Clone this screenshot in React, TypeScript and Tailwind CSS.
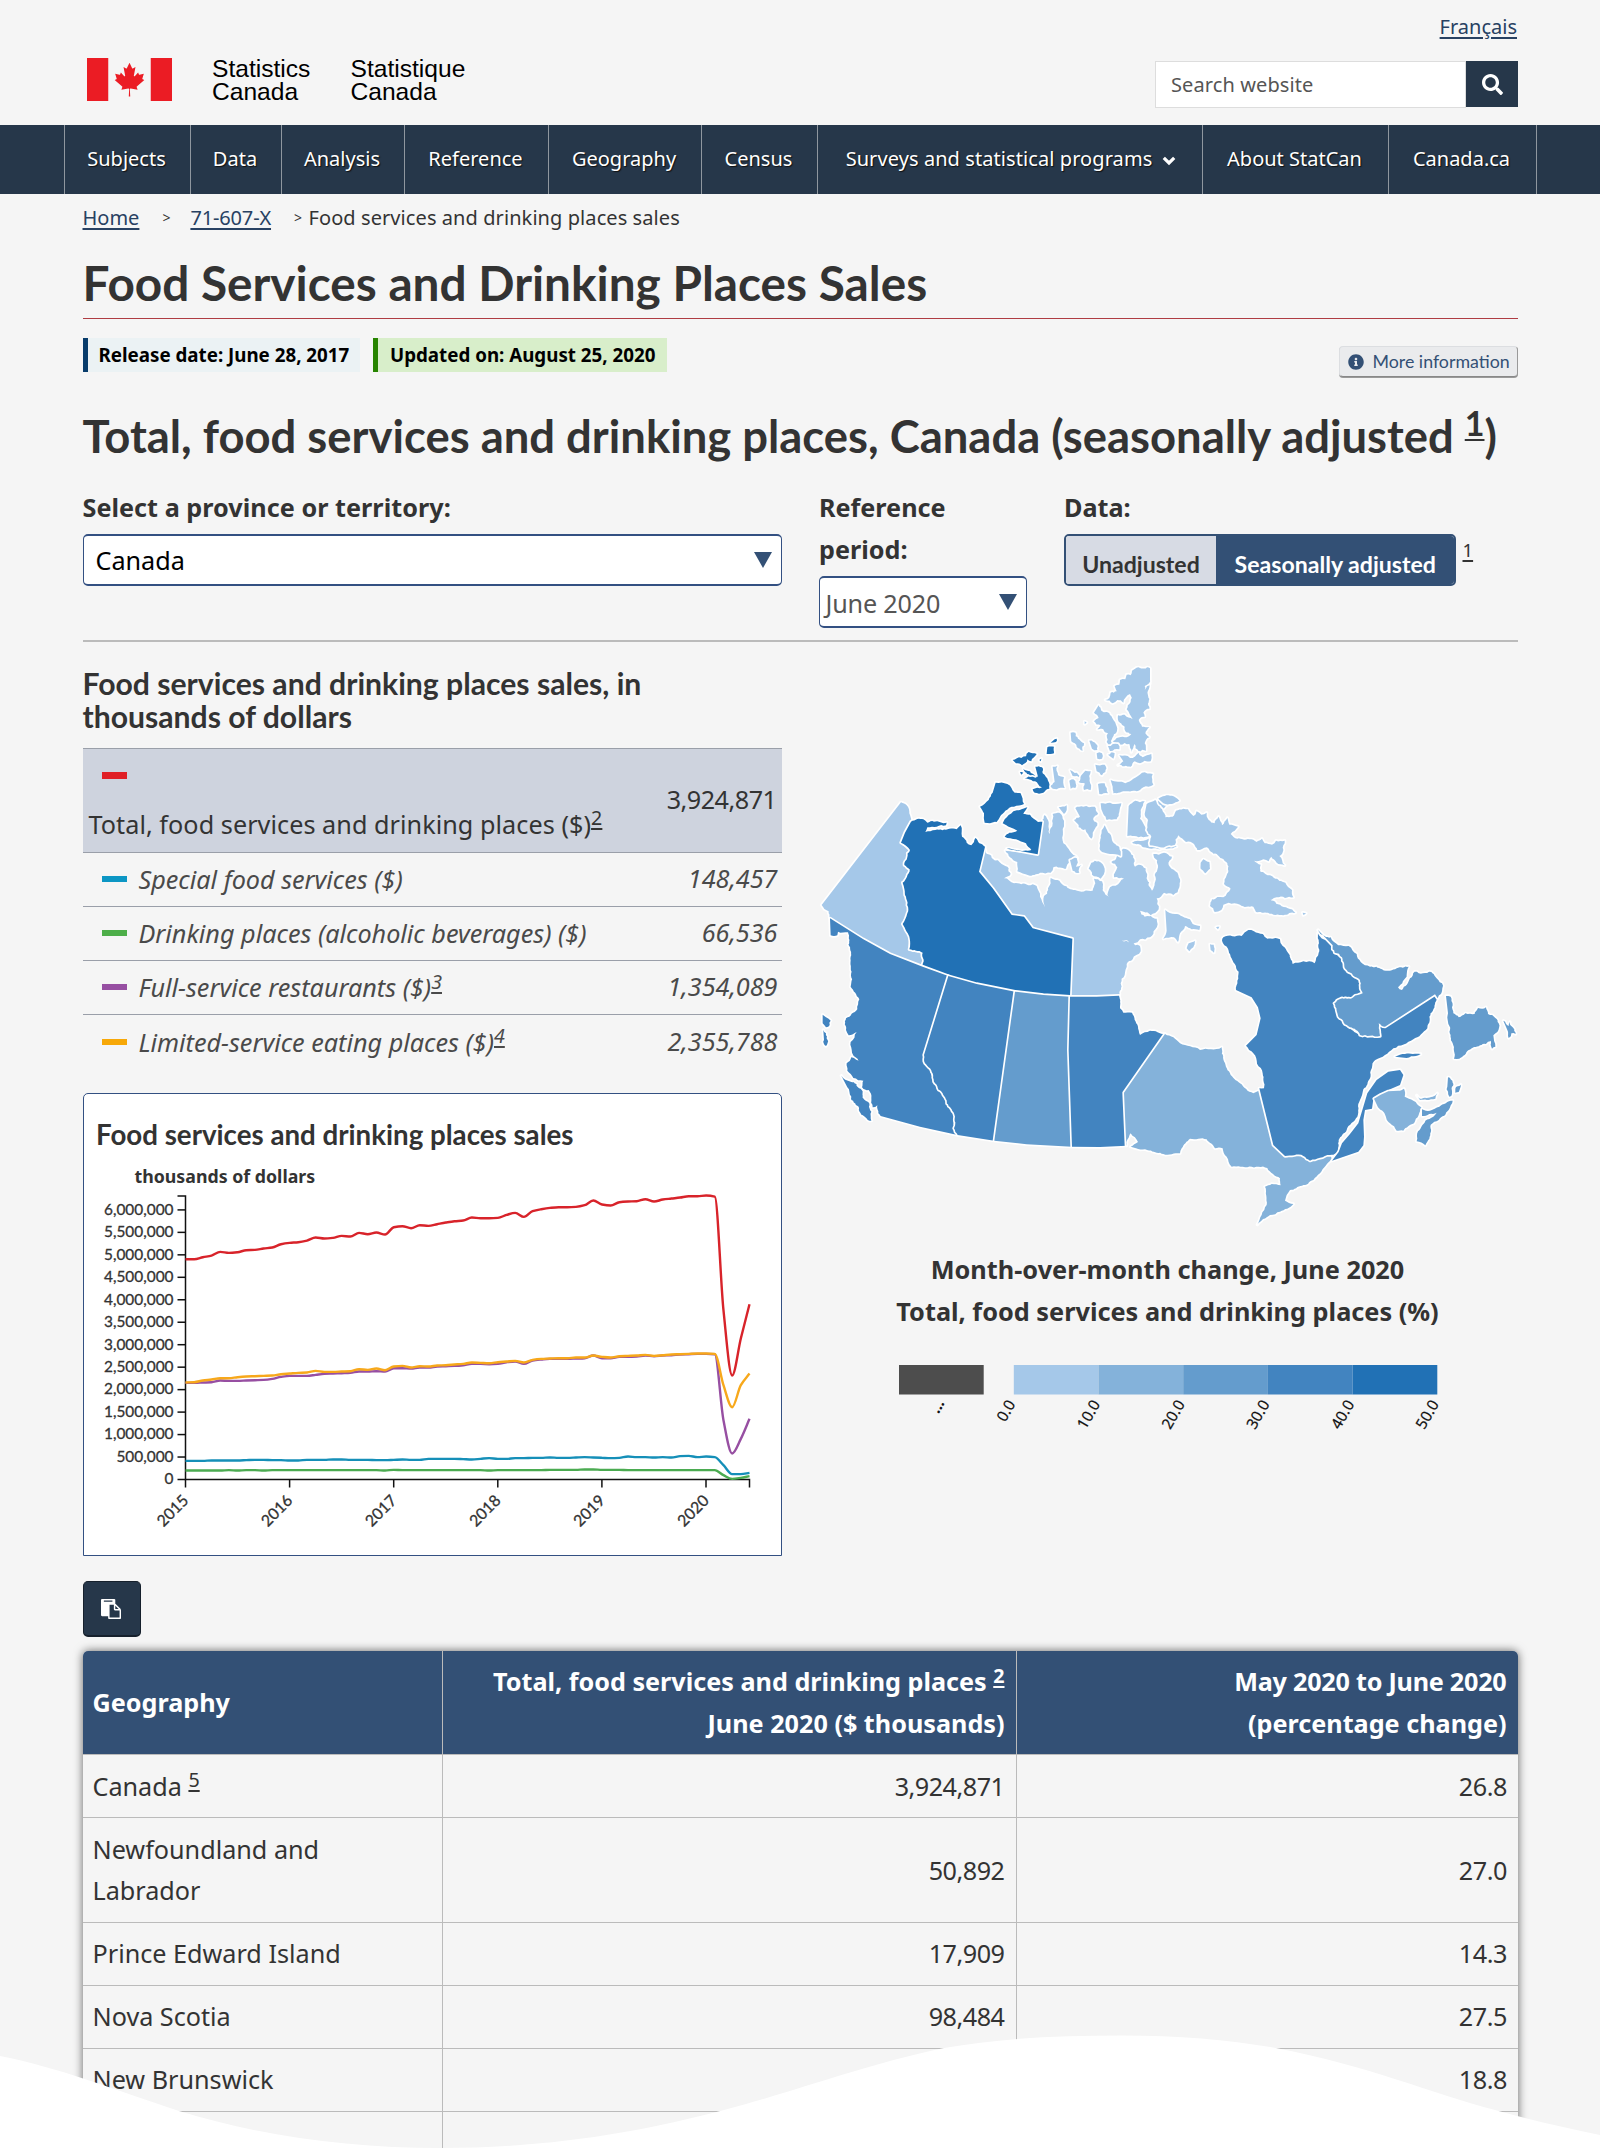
import React from "react";
import { FaSearch, FaInfoCircle } from "react-icons/fa";

const NAV: { label: string; width: string; caret?: boolean }[] = [
  { label: "Subjects", width: "w-[126px]" },
  { label: "Data", width: "w-[91px]" },
  { label: "Analysis", width: "w-[123px]" },
  { label: "Reference", width: "w-[144px]" },
  { label: "Geography", width: "w-[153px]" },
  { label: "Census", width: "w-[116px]" },
  { label: "Surveys and statistical programs", width: "w-[385px]", caret: true },
  { label: "About StatCan", width: "w-[186px]" },
  { label: "Canada.ca", width: "w-[148px]" },
];

const SERIES_ROWS = [
  { name: "Special food services ($)", value: "148,457", color: "bg-[#0c96c4]" },
  { name: "Drinking places (alcoholic beverages) ($)", value: "66,536", color: "bg-[#4dae49]" },
  { name: "Full-service restaurants ($)", value: "1,354,089", color: "bg-[#974fa2]", note: "3" },
  { name: "Limited-service eating places ($)", value: "2,355,788", color: "bg-[#f7a808]", note: "4" },
];

const GEO_ROWS = [
  { name: "Canada", note: "5", total: "3,924,871", change: "26.8" },
  { name: "Newfoundland and Labrador", total: "50,892", change: "27.0" },
  { name: "Prince Edward Island", total: "17,909", change: "14.3" },
  { name: "Nova Scotia", total: "98,484", change: "27.5" },
  { name: "New Brunswick", total: "", change: "18.8" },
  { name: "", total: "", change: "" },
];

/* ---------- line chart ---------- */

const X0 = 101.5;
const X1 = 665.5;
const Y0 = 385.5;
const UNIT = 0.044933;

type Line = { color: string; values: number[] };

const k = (list: number[]) => list.map((v) => (1198 - v) * 7.417);

const LINES: Line[] = [
  {
    color: "#974fa2",
    values: k([
      908, 908, 907, 906, 901, 902, 902, 901, 900, 899, 896, 890, 887, 887, 887, 884, 881, 880, 879, 878, 874, 874, 873,
      874, 864, 864, 865, 862, 862, 859, 858, 857, 855, 851, 851, 852, 851, 846, 844, 851, 841, 838, 836, 836, 836, 835,
      834, 826, 834, 834, 830, 830, 829, 826, 828, 826, 825, 823, 822, 821, 821, 822, 1020, 1120, 1076, 1016,
    ]),
  },
  {
    color: "#f7a81b",
    values: k([
      907, 906, 901, 898, 894, 894, 891, 889, 888, 887, 886, 882, 880, 878, 877, 872, 875, 875, 874, 873, 867, 869, 865,
      870, 859, 857, 862, 858, 859, 856, 855, 853, 851, 847, 848, 849, 846, 844, 842, 847, 839, 836, 835, 834, 834, 832,
      832, 826, 830, 832, 828, 827, 826, 824, 827, 825, 823, 822, 821, 820, 820, 821, 915, 981, 915, 880,
    ]),
  },
  {
    color: "#158fb8",
    values: k([
      1142, 1142, 1142, 1141, 1141, 1141, 1141, 1140, 1139, 1139, 1140, 1140, 1141, 1141, 1139, 1139, 1139, 1138, 1138,
      1139, 1139, 1139, 1140, 1140, 1139, 1138, 1139, 1139, 1136, 1136, 1136, 1136, 1137, 1138, 1136, 1134, 1136, 1136,
      1134, 1134, 1133, 1133, 1132, 1133, 1133, 1132, 1131, 1132, 1133, 1134, 1133, 1129, 1131, 1131, 1132, 1131, 1132,
      1128, 1127, 1131, 1129, 1131, 1155, 1182, 1182, 1178,
    ]),
  },
  {
    color: "#4bab51",
    values: k([
      1171, 1171, 1171, 1171, 1171, 1170, 1171, 1170, 1170, 1171, 1170, 1170, 1170, 1170, 1170, 1170, 1170, 1170, 1170,
      1170, 1170, 1170, 1170, 1171, 1169, 1170, 1170, 1170, 1170, 1170, 1170, 1170, 1170, 1170, 1170, 1171, 1170, 1170,
      1170, 1170, 1170, 1170, 1169, 1169, 1169, 1169, 1168, 1168, 1169, 1169, 1169, 1170, 1170, 1170, 1170, 1170, 1170,
      1170, 1170, 1170, 1170, 1170, 1185, 1196, 1193, 1188,
    ]),
  },
  {
    color: "#d8232a",
    values: k([
      537, 537, 531, 526, 515, 518, 516, 510, 509, 505, 502, 492, 488, 486, 481, 472, 475, 473, 467, 469, 458, 462, 457,
      463, 441, 438, 444, 435, 437, 432, 427, 423, 421, 412, 414, 414, 413, 404, 398, 410, 393, 387, 383, 381, 381, 380,
      375, 361, 373, 376, 366, 364, 363, 357, 364, 358, 355, 352, 348, 348, 346, 349, 690, 886, 775, 672,
    ]),
  },
];

/* Monotone cubic interpolation, so the curve never overshoots its data. */
function linePath(values: number[]) {
  const step = (X1 - X0) / (values.length - 1);
  const y = values.map((v) => Y0 - v * UNIT);
  const slope = y.slice(1).map((v, i) => v - y[i]);
  const tangent = y.map((_, i) => {
    if (i === 0) return slope[0];
    if (i === y.length - 1) return slope[i - 1];
    const a = slope[i - 1];
    const b = slope[i];
    return a * b <= 0 ? 0 : (2 * a * b) / (a + b);
  });
  let d = `M${X0},${y[0].toFixed(2)}`;
  for (let i = 1; i < y.length; i++) {
    const xa = X0 + step * (i - 1);
    const xb = X0 + step * i;
    d += `C${(xa + step / 3).toFixed(2)},${(y[i - 1] + tangent[i - 1] / 3).toFixed(2)} ${(xb - step / 3).toFixed(2)},${(
      y[i] -
      tangent[i] / 3
    ).toFixed(2)} ${xb.toFixed(2)},${y[i].toFixed(2)}`;
  }
  return d;
}

function SalesChart() {
  const ticks = Array.from({ length: 13 }, (_, i) => i * 500000);
  const years = [2015, 2016, 2017, 2018, 2019, 2020];
  return (
    <svg width="695" height="459" viewBox="0 0 695 459" className="block">
      <text x="12" y="50.8" fontSize="27.7" fontWeight="700" fill="#333" fontFamily="Lato, sans-serif">
        Food services and drinking places sales
      </text>
      <text x="50.5" y="88.5" fontSize="17.75" fontWeight="700" fill="#333" fontFamily="'Noto Sans', sans-serif">
        thousands of dollars
      </text>
      <path d={`M93.5,102H${X0}V${Y0}H${X1}V393.500`} fill="none" stroke="#111" strokeWidth="1.5" />
      {ticks.map((t) => {
        const y = Y0 - (t / 1000) * UNIT;
        return (
          <g key={t}>
            <path d={`M93.5,${y}H${X0}`} stroke="#111" strokeWidth="1.5" />
            <text x="89.5" y={y + 4.8} fontSize="15.4" textAnchor="end" fill="#333" stroke="#333" strokeWidth="0.3" fontFamily="Lato, sans-serif">
              {t.toLocaleString("en-US")}
            </text>
          </g>
        );
      })}
      {years.map((yr, i) => {
        const x = X0 + i * 104.1;
        return (
          <g key={yr}>
            <path d={`M${x},${Y0}V393.500`} stroke="#111" strokeWidth="1.5" />
            <text
              transform={`translate(${x + 4},407.5) rotate(-45)`}
              fontSize="15.8"
              textAnchor="end"
              fill="#333"
              stroke="#333"
              strokeWidth="0.3"
              fontFamily="Lato, sans-serif"
            >
              {yr}
            </text>
          </g>
        );
      })}
      {LINES.map((l) => (
        <path key={l.color} d={linePath(l.values)} fill="none" stroke={l.color} strokeWidth="2.4" strokeLinejoin="round" />
      ))}
    </svg>
  );
}

/* ---------- map ---------- */

/* Each region is a list of runs; "r" runs are coastlines and get a ragged edge. */
type Run = ["s" | "r", string];
type Region = { fill: string; runs: Run[]; amp?: number };

const C = { c0: "#a5c8e9", c1: "#84b2da", c2: "#649ccd", c3: "#4284c0", c4: "#2171b5" };

const parse = (s: string) => s.trim().split(/\s+/).map((p) => p.split(",").map(Number) as [number, number]);

const noise = (x: number, y: number) => {
  const v = Math.sin(x * 12.9898 + y * 78.233) * 43758.5453;
  return (v - Math.floor(v)) * 2 - 1;
};

function ragged(a: [number, number], b: [number, number], amp: number): string {
  const dx = b[0] - a[0];
  const dy = b[1] - a[1];
  const len = Math.hypot(dx, dy);
  if (len < 9) return ` ${b[0].toFixed(1)},${b[1].toFixed(1)}`;
  const off = noise(a[0] + b[0], a[1] + b[1]) * amp * Math.min(len, 26);
  const m: [number, number] = [(a[0] + b[0]) / 2 - (dy / len) * off, (a[1] + b[1]) / 2 + (dx / len) * off];
  return ragged(a, m, amp) + ragged(m, b, amp);
}

function regionPath({ runs, amp = 0.22 }: Region) {
  let d = "";
  let prev: [number, number] | null = null;
  runs.forEach(([kind, s]) => {
    parse(s).forEach((p) => {
      if (!prev) d = `M${p[0]},${p[1]}`;
      else if (kind === "r") d += ragged(prev, p, amp);
      else d += ` ${p[0]},${p[1]}`;
      prev = p;
    });
  });
  return d + "Z";
}

const isle = (fill: string, s: string, amp?: number): Region => ({ fill, runs: [["r", s]], amp });

const REGIONS: Region[] = [
  // Nunavut mainland
  {
    fill: C.c0,
    runs: [
      ["s", "525,597"],
      [
        "r",
        "548,626 575,642 596,655 602,672 582,685 612,700 655,706 680,708 690,740 704,772 702,738 722,700 722,684 742,690 760,706 795,720 848,722 856,700 852,686 876,694 884,728 896,742 900,712 930,696 942,686 912,682 922,652 904,636 920,620 940,596 962,608 975,650 998,648 1012,690 1026,722 1034,700 1044,652 1030,612 1062,608 1086,620 1076,645 1110,688 1108,712 1090,735 1062,728 1040,745 1046,778 1022,796 990,782 1004,800 1040,806 1036,838 1020,862 990,868 972,880 935,872 990,888 992,904 968,928 950,942 944,975 932,1000 927,1037",
      ],
      ["s", "780,1040 787,866 668,835 642,800 605,795 548,715 507,665"],
    ],
    amp: 0.2,
  },
  // Victoria Island, eastern part
  {
    fill: C.c0,
    runs: [
      ["s", "683,613 697,515"],
      ["r", "704,495 716,516 720,552 728,520 728,492 748,488 762,512 760,580 780,604 802,624 778,632 768,656 730,652 722,668 690,668 655,676 622,664 622,636 600,622 586,602"],
    ],
    amp: 0.14,
  },
  // Axel Heiberg
  isle(C.c0, "866,166 874,182 890,186 904,198 918,224 920,246 908,262 902,292 890,276 894,250 880,238 862,238 872,226 852,214 866,204 852,188", 0.2),
  // Ellesmere
  isle(
    C.c0,
    "1020,55 985,52 966,62 962,76 950,74 946,88 930,90 928,104 914,108 920,124 902,128 898,144 886,150 908,160 922,150 940,158 960,132 962,156 950,178 968,208 944,194 924,196 930,218 944,230 946,244 964,252 944,262 920,264 908,274 930,284 958,282 964,306 974,282 986,304 1008,302 1004,280 1018,262 1006,250 1018,232 996,230 986,210 1004,200 1000,188 1018,176 1020,100 1004,120 1004,108 1020,88",
    0.2,
  ),
  isle(C.c0, "928,316 960,324 986,308 998,322 1024,312 1022,334 1004,332 990,340 974,334 962,350 924,346 940,334", 0.2),
  isle(C.c0, "902,390 946,400 970,386 996,368 1028,372 1030,404 1000,412 990,420 950,424 910,430 908,410", 0.14),
  isle(C.c0, "782,248 796,248 804,266 822,280 818,302 800,290 784,274"),
  isle(C.c0, "838,272 858,282 862,300 846,296"),
  isle(C.c0, "894,288 924,282 928,298 900,304"),
  isle(C.c0, "860,310 876,310 876,326 862,326"),
  isle(C.c0, "894,314 914,310 910,326"),
  isle(C.c0, "856,344 884,344 886,366 876,376 860,364"),
  isle(C.c0, "864,402 884,400 894,430 868,432"),
  isle(C.c0, "728,350 742,348 744,376 762,382 764,414 740,418 718,410 734,396", 0.14),
  isle(C.c0, "780,360 800,368 814,380 788,378"),
  isle(C.c0, "826,362 842,364 842,420 822,420 824,400 806,396 814,376", 0.14),
  isle(C.c0, "778,392 790,388 796,414 782,416"),
  isle(C.c0, "746,472 770,466 762,492"),
  isle(C.c0, "796,474 820,470 854,470 864,490 850,504 862,520 844,566 826,538 806,532 792,510 810,500", 0.2),
  isle(C.c0, "872,460 900,458 934,460 928,486 920,508 890,510 880,492 874,478", 0.12),
  isle(C.c0, "884,526 872,558 870,600 900,612 932,618 928,592 912,580 904,560 892,542", 0.14),
  isle(C.c0, "844,638 866,634 884,656 872,686 846,674 836,656", 0.16),
  isle(C.c0, "780,630 800,624 798,650 814,646 808,668 788,662"),
  // Brodeur and Borden peninsulas
  isle(C.c0, "956,468 976,452 1004,454 992,480 990,506 1006,532 1026,552 1000,562 972,558 952,558", 0.14),
  isle(C.c0, "1044,452 1068,438 1084,460 1040,490 1074,520 1070,560 1100,590 1050,598 1000,592 966,578 1000,572 1032,560 1018,520 1006,490 1014,466", 0.12),
  // Baffin Island
  isle(
    C.c0,
    "1010,462 1036,450 1050,470 1066,502 1088,500 1098,482 1120,476 1134,478 1150,498 1160,484 1174,494 1190,488 1196,510 1214,520 1226,500 1236,526 1252,504 1258,524 1284,530 1262,552 1282,566 1318,568 1340,576 1356,566 1364,580 1386,584 1398,572 1424,572 1420,600 1408,618 1424,646 1400,638 1384,620 1376,634 1360,628 1332,632 1352,644 1350,664 1366,672 1392,684 1426,698 1446,720 1450,742 1400,742 1368,748 1410,764 1456,788 1420,796 1374,788 1338,786 1330,770 1290,764 1256,758 1240,764 1234,780 1214,786 1200,768 1206,748 1240,742 1262,716 1242,702 1250,676 1252,640 1220,612 1190,592 1162,600 1152,582 1128,576 1105,556 1095,584 1050,592 1020,586 1024,560 1010,540 1014,510 1004,492",
    0.16,
  ),
  isle(C.c0, "1045,446 1064,438 1086,437 1108,452 1086,462 1060,460", 0.1),
  isle(C.c0, "1180,628 1198,636 1200,656 1186,670 1172,656 1172,638", 0.06),
  // Southampton and neighbours
  isle(C.c0, "1066,780 1095,792 1140,808 1148,822 1170,828 1168,840 1145,838 1125,828 1110,850 1104,876 1092,862 1060,866 1070,842", 0.14),
  isle(C.c0, "1130,895 1136,880 1155,873 1150,892 1138,904", 0.1),
  isle(C.c0, "1200,883 1211,884 1212,908 1202,900", 0.1),
  isle(C.c0, "1218,832 1228,830 1224,838", 0.1),
  isle(C.c0, "1478,788 1488,790 1480,795", 0.1),
  isle(C.c0, "824,214 830,218 824,222", 0.1),
  // Yukon
  {
    fill: C.c0,
    runs: [
      ["s", "273,457"],
      ["r", "290,466 303,515"],
      ["s", "285,548 273,578"],
      ["r", "300,600 283,645 299,658 291,680 278,698 288,740 292,790 278,822 290,845 299,865 298,898 338,908"],
      ["s", "338,950 240,912 160,868 60,805"],
      ["r", "56,784 35,765"],
    ],
    amp: 0.14,
  },
  // Northwest Territories mainland
  {
    fill: C.c4,
    runs: [
      ["s", "303,515"],
      ["r", "322,507 340,508 352,518 372,515 410,518 408,526 352,532 346,546 376,540 418,536 440,538 452,526 456,560 470,578 484,586 496,564 508,580 525,590"],
      ["s", "507,665 548,715 605,795 642,800 668,835 787,866 780,1040 700,1035 615,1025 500,1002 415,978 338,950"],
      ["r", "338,908 298,898 299,865 290,845 278,822 292,790 288,740 278,698 291,680 299,658 283,645 300,600 273,578"],
      ["s", "285,548"],
    ],
    amp: 0.14,
  },
  isle(C.c4, "557,398 592,402 614,428 632,430 642,462 612,470 586,482 570,500 560,516 540,520 524,518 522,490 510,470 536,450 548,428", 0.12),
  {
    fill: C.c4,
    runs: [
      ["r", "584,508 610,484 652,472 640,492 660,494 684,516 697,515"],
      ["s", "683,613 590,596"],
      ["r", "620,600 664,600 648,580 618,568 584,560 598,548 622,542 600,532 578,520"],
    ],
    amp: 0.1,
  },
  isle(C.c4, "608,330 634,324 656,306 680,312 664,334 652,328 636,346 618,340"),
  isle(C.c4, "676,350 696,352 698,370 714,392 718,416 700,428 674,428 668,418 696,412 684,402 664,390 644,386 658,378 684,380", 0.18),
  isle(C.c4, "640,356 660,364 676,378 660,376 644,366"),
  isle(C.c4, "712,292 732,290 732,310 710,312", 0.1),
  isle(C.c4, "734,268 740,266 738,276 722,278"),
  isle(C.c4, "630,366 640,368 634,374"),
  isle(C.c4, "688,330 694,326 692,334"),
  // British Columbia
  {
    fill: C.c3,
    runs: [
      ["s", "60,805 160,868 240,912 338,950 415,978 342,1215"],
      ["r", "345,1240 360,1255 375,1300 400,1335 435,1400 432,1435 443,1455"],
      ["s", "330,1430 212,1398"],
      ["r", "205,1390 202,1366 188,1372 184,1344 176,1320 156,1312 160,1292 130,1284 112,1262 110,1240 124,1222 152,1238 126,1208 122,1176 140,1146 116,1156 108,1140 108,1105 142,1078 148,1048 122,1010 122,920 114,847 84,845 82,856 62,856"],
    ],
    amp: 0.14,
  },
  isle(C.c3, "94,1277 122,1295 152,1316 164,1350 184,1385 184,1412 166,1402 146,1370 124,1340 112,1312"),
  isle(C.c3, "38,1094 48,1102 62,1112 48,1132 38,1120"),
  isle(C.c3, "40,1140 48,1150 48,1188 42,1170"),
  // Alberta
  {
    fill: C.c3,
    runs: [
      ["s", "342,1215 415,978 500,1002 615,1025 553,1472 443,1455"],
      ["r", "432,1435 435,1400 400,1335 375,1300 360,1255 345,1240 342,1215"],
    ],
    amp: 0.14,
  },
  // Saskatchewan
  { fill: C.c2, runs: [["s", "615,1025 700,1035 780,1040 776,1200 786,1490 650,1483 553,1472"]] },
  // Manitoba
  {
    fill: C.c3,
    runs: [
      ["s", "780,1040 860,1040 927,1037"],
      ["r", "930,1075 940,1088 966,1088 984,1130 990,1155 1020,1142 1065,1152"],
      ["s", "942,1328 949,1487 870,1491 786,1490 776,1200"],
    ],
    amp: 0.1,
  },
  // Ontario
  {
    fill: C.c1,
    runs: [
      ["s", "1065,1152"],
      ["r", "1090,1162 1110,1180 1170,1200 1235,1192 1240,1228 1260,1270 1290,1300 1330,1330 1350,1322"],
      ["s", "1390,1485 1425,1518 1480,1518 1500,1532 1560,1515 1565,1525"],
      ["r", "1530,1570 1510,1590 1440,1620 1425,1652 1450,1662 1410,1685 1380,1695 1342,1724 1355,1695 1370,1665 1365,1610 1385,1602 1412,1606 1410,1585 1372,1554 1265,1550 1250,1520 1238,1495 1215,1495 1190,1468 1140,1466 1115,1495 1110,1510 1060,1512 1040,1508 1005,1498 978,1495 962,1490 984,1476 962,1450 949,1487"],
      ["s", "942,1328"],
    ],
    amp: 0.12,
  },
  // Quebec, north shore
  {
    fill: C.c3,
    runs: [
      ["r", "1348,1315 1362,1315 1358,1270 1330,1210 1308,1187"],
      ["s", "1340,1155 1352,1105 1344,1072 1325,1042 1278,1020"],
      ["r", "1286,965 1262,920 1254,896 1236,872 1240,862 1295,858 1315,840 1332,844 1358,852 1372,866 1410,868 1418,888 1434,908 1448,942 1480,934 1514,940 1526,908 1526,870 1524,848 1540,868 1568,886 1574,908 1596,922 1610,960 1650,990 1658,1030 1630,1042 1592,1046 1573,1060 1585,1100 1620,1132 1650,1155 1710,1158 1706,1120 1725,1130"],
      ["s", "1875,1033 1883,1045"],
      ["r", "1875,1062 1858,1100 1852,1135 1810,1168 1750,1195 1696,1230 1682,1262 1680,1285 1660,1318 1650,1350 1642,1400 1610,1440 1586,1470 1580,1510 1560,1515 1500,1532 1480,1518 1425,1518"],
      ["s", "1390,1485"],
    ],
    amp: 0.13,
  },
  {
    fill: C.c3,
    runs: [["s", "1566,1532 1586,1506 1596,1480 1620,1452 1645,1420 1660,1370 1672,1330 1700,1290 1735,1265 1770,1260 1780,1275 1770,1305 1735,1320 1700,1340 1690,1348 1686,1376 1665,1380 1660,1410 1662,1460 1660,1486 1645,1505"]],
  },
  isle(C.c3, "1755,1220 1785,1212 1832,1212 1818,1218 1790,1224", 0.08),
  // Newfoundland and Labrador
  {
    fill: C.c2,
    runs: [
      ["r", "1524,840 1544,858 1562,862 1572,876 1600,888 1616,888 1640,912 1652,936 1680,950 1716,958 1740,962 1760,955 1796,950 1790,974 1764,1012 1776,1020 1800,985 1814,965 1864,966 1876,980 1896,1000 1894,1030 1883,1045"],
      ["s", "1875,1033 1725,1130"],
      ["r", "1706,1120 1710,1158 1650,1155 1620,1132 1585,1100 1573,1060 1592,1046 1630,1042 1658,1030 1650,990 1610,960 1596,922 1574,908 1568,886"],
    ],
    amp: 0.18,
  },
  isle(C.c2, "1908,1038 1922,1040 1928,1066 1930,1090 1946,1102 1966,1090 1994,1092 2004,1074 2028,1072 2034,1092 2056,1104 2066,1120 2062,1146 2050,1156 2056,1190 2046,1196 2042,1172 2010,1186 1976,1200 1948,1226 1932,1226 1928,1180 1920,1140 1914,1090", 0.16),
  isle(C.c2, "2080,1112 2096,1128 2100,1116 2110,1134 2117,1152 2104,1150 2096,1164 2092,1140", 0.2),
  // New Brunswick
  {
    fill: C.c1,
    runs: [
      ["s", "1692,1346 1712,1334 1735,1324 1765,1322"],
      ["r", "1782,1316 1784,1340 1810,1352 1834,1372 1826,1395 1812,1420 1780,1442 1760,1442 1740,1420 1720,1385 1704,1372"],
    ],
    amp: 0.12,
  },
  // Prince Edward Island
  isle(C.c1, "1820,1336 1830,1346 1850,1344 1868,1340 1882,1330 1876,1346 1850,1350 1830,1350", 0.12),
  // Nova Scotia
  isle(C.c2, "1836,1378 1860,1382 1888,1370 1928,1352 1916,1380 1886,1410 1862,1424 1858,1466 1846,1486 1820,1474 1824,1444 1846,1412 1870,1400 1880,1388 1836,1398", 0.12),
  isle(C.c2, "1914,1282 1928,1298 1926,1332 1918,1340 1912,1310"),
  isle(C.c2, "1936,1316 1952,1304 1946,1326 1936,1328"),
];

function CanadaMap() {
  return (
    <svg width="720" height="590" viewBox="0 0 2160 1770" className="-ml-[8.500px] block max-w-none">
      {REGIONS.map((r, i) => (
        <path
          key={i}
          d={regionPath(r)}
          fill={r.fill}
          stroke="#fff"
          strokeWidth={10}
          strokeLinejoin="round"
          style={{ paintOrder: "stroke" }}
        />
      ))}
    </svg>
  );
}

function MapLegend() {
  const bins = [C.c0, C.c1, C.c2, C.c3, C.c4];
  return (
    <svg width="560" height="80" viewBox="0 0 560 80" className="ml-[80.5px] block">
      <rect x="0" y="0" width="84.7" height="29.5" fill="#4d4d4d" />
      {bins.map((b, i) => (
        <rect key={b} x={114.8 + i * 84.7} y="0" width="84.7" height="29.5" fill={b} />
      ))}
      <g fontSize="15.3" fill="#111" fontFamily="'Noto Sans', sans-serif" textAnchor="end">
        <text transform="translate(46,38) rotate(-60)" fontWeight="700">
          ...
        </text>
        {["0.0", "10.0", "20.0", "30.0", "40.0", "50.0"].map((t, i) => (
          <text key={t} transform={`translate(${117 + i * 84.7},39) rotate(-60)`} stroke="#111" strokeWidth="0.2">
            {t}
          </text>
        ))}
      </g>
    </svg>
  );
}

/* ---------- page ---------- */

function Note({ children, className = "" }: { children: React.ReactNode; className?: string }) {
  return (
    <sup className={`top-[-0.42em] text-[78%] underline decoration-[1.5px] underline-offset-[3px] ${className}`}>{children}</sup>
  );
}

function Flag() {
  return (
    <svg width="85" height="43" viewBox="0 0 9600 4800" preserveAspectRatio="none" fill="#eb1c24">
      <path d="M0 0h2400v4800H0zM7200 0h2400v4800H7200z" />
      <path
        transform="translate(480 170) scale(.9 .93)"
        d="m4890 4430-45-863a95 95 0 0 1 111-98l859 151-116-320a65 65 0 0 1 20-73l941-762-212-99a65 65 0 0 1-34-79l186-572-542 115a65 65 0 0 1-73-38l-105-247-423 454a65 65 0 0 1-111-57l204-1052-327 189a65 65 0 0 1-91-27l-332-652-332 652a65 65 0 0 1-91 27l-327-189 204 1052a65 65 0 0 1-111 57l-423-454-105 247a65 65 0 0 1-73 38l-542-115 186 572a65 65 0 0 1-34 79l-212 99 941 762a65 65 0 0 1 20 73l-116 320 859-151a95 95 0 0 1 111 98l-45 863z"
      />
    </svg>
  );
}

function Arrow() {
  return (
    <svg width="18" height="16" viewBox="0 0 18 16" fill="#335075">
      <path d="M0 0h18L9 16z" />
    </svg>
  );
}

function CopyIcon() {
  return (
    <svg width="20" height="20" viewBox="0 0 1792 1792" fill="currentColor">
      <path d="M768 1664h896v-640h-416q-40 0-68-28t-28-68v-416h-384v1152zm256-1440v-64q0-13-9.5-22.5t-22.5-9.5h-704q-13 0-22.5 9.5t-9.5 22.5v64q0 13 9.5 22.5t22.5 9.5h704q13 0 22.5-9.5t9.5-22.5zm256 672h299l-299-299v299zm512 128v672q0 40-28 68t-68 28h-960q-40 0-68-28t-28-68v-160h-544q-40 0-68-28t-28-68v-1344q0-40 28-68t68-28h1088q40 0 68 28t28 68v328q21 13 36 28l408 408q28 28 48 76t20 88z" />
    </svg>
  );
}

export default function App() {
  return (
    <div className="relative h-[2148px] w-[1600px] overflow-hidden bg-[#f5f5f5] font-['Noto_Sans',sans-serif] text-[#333]">
      <header className="flex h-[125px] justify-between pr-[82px] pl-[87px]">
        <div className="flex pt-[58px] font-['Liberation_Sans',sans-serif] text-[24.6px] leading-[23.6px] text-black">
          <Flag />
          <div className="-mt-[1.5px] ml-[40px] w-[138.5px]">
            Statistics
            <br />
            Canada
          </div>
          <div className="-mt-[1.5px]">
            Statistique
            <br />
            Canada
          </div>
        </div>
        <div className="flex flex-col items-end text-[20px]">
          <a className="mt-[7px] mr-[1px] leading-[39px] text-[#284162] underline decoration-[1.5px] underline-offset-[3px]">Français</a>
          <div className="mt-[15px] flex">
            <div className="h-[47px] w-[311px] border border-[#ddd] bg-white pl-[15px] leading-[46px] tracking-[0.1px] text-[#555]">
              Search website
            </div>
            <button className="flex h-[46px] w-[52px] items-center justify-center bg-[#26374a] text-white">
              <FaSearch size={21} />
            </button>
          </div>
        </div>
      </header>

      <nav className="h-[69px] bg-[#26374a] pl-[64px] text-[20px] text-white [text-shadow:1px_1px_1px_#111]">
        <ul className="flex h-full w-[1473px] border-l border-[#8f979f]">
          {NAV.map((n) => (
            <li key={n.label} className={`flex shrink-0 items-center justify-center border-r border-[#8f979f] pr-[2px] pb-[1px] ${n.width}`}>
              <span className={n.caret ? "ml-[4px] tracking-[0.08px]" : ""}>{n.label}</span>
              {n.caret && (
                <svg width="14" height="10" viewBox="0 0 14 10" className="mt-[3px] ml-[10px]">
                  <path d="M1.8 1.8 7 7l5.200-5.200" fill="none" stroke="#fff" strokeWidth="3.2" />
                </svg>
              )}
            </li>
          ))}
        </ul>
      </nav>

      <main className="pr-[82.5px] pl-[82.5px]">
        <div className="flex h-[46px] text-[20px] leading-[47px]">
          <a className="text-[#284162] underline decoration-[1.5px] underline-offset-[3px]">Home</a>
          <span className="ml-[23px] w-[28px] text-[14px]">&gt;</span>
          <a className="tracking-[-0.15px] text-[#284162] underline decoration-[1.5px] underline-offset-[3px]">71-607-X</a>
          <span className="ml-[23px] w-[14.5px] text-[14px]">&gt;</span>
          <span className="tracking-[0.08px]">Food services and drinking places sales</span>
        </div>

        <h1 className="h-[79px] border-b-[1.5px] border-[#af3c43] font-[Lato] text-[47.75px] leading-[85px] font-bold">
          Food Services and Drinking Places Sales
        </h1>

        <div className="flex h-[63px] items-start pt-[19px] text-[18.75px] leading-[34px] font-bold text-black">
          <span className="h-[34px] w-[277px] border-l-[5px] border-[#083c6b] bg-[#ebf2f4] pl-[11px] whitespace-nowrap">
            Release date: June 28, 2017
          </span>
          <span className="ml-[13.500px] h-[34px] w-[294px] border-l-[5px] border-[#278400] bg-[#d8eeca] pl-[12px] whitespace-nowrap">
            Updated on: August 25, 2020
          </span>
          <button className="mt-[8px] ml-auto flex h-[31px] w-[179px] items-center rounded-[4px] border border-[#dcdee1] border-r-[#999] border-b-[#888] bg-[#eaebed] pl-[8px] font-[Lato] text-[17.8px] leading-[28px] font-normal text-[#335075] shadow-[0_1px_0_#999]">
            <FaInfoCircle size={16} className="mr-[9px]" />
            <span className="pb-[1px]">More information</span>
          </button>
        </div>

        <h2 className="h-[105px] font-[Lato] text-[45.4px] leading-[107px] font-bold whitespace-nowrap">
          Total, food services and drinking places, Canada (seasonally adjusted{" "}
          <sup className="top-[-0.49em] text-[75%] leading-none underline decoration-2 underline-offset-[3px]">1</sup>)
        </h2>

        <section className="flex h-[154.5px] border-b-[2.5px] border-[#bbb] text-[25.2px] leading-[41.6px]">
          <div className="w-[699px]">
            <div className="font-bold tracking-[0.03px]">Select a province or territory:</div>
            <div className="mt-[5px] flex h-[52px] items-center justify-between rounded-[5px] border-[1.5px] border-t-2 border-b-2 border-[#335082] bg-white pr-[9px] pl-[12px] text-black">
              <span className="pt-[3px]">Canada</span> <Arrow />
            </div>
          </div>
          <div className="ml-[37.5px] w-[207.5px]">
            <div className="w-[150px] font-bold">Reference period:</div>
            <div className="mt-[5.500px] flex h-[52px] items-center justify-between rounded-[5px] border-[1.5px] border-t-2 border-b-2 border-[#335082] bg-white pr-[9px] pl-[5.500px] text-[#555]">
              <span className="pt-[4px] tracking-[-0.2px]">June 2020</span> <Arrow />
            </div>
          </div>
          <div className="ml-[37.500px]">
            <div className="font-bold">Data:</div>
            <div className="flex">
              <div className="mt-[5px] flex h-[52px] w-[391.500px] overflow-hidden rounded-[5px] border-2 border-[#335075] font-[Lato] text-[23.1px] leading-[56px] font-bold">
                <div className="w-[150px] bg-[#d7dbe4] text-center">Unadjusted</div>
                <div className="flex-1 bg-[#335075] pl-[1px] text-center text-white">Seasonally adjusted</div>
              </div>
              <span className="ml-[7px] text-[18.5px] leading-[41px] underline decoration-[1.5px] underline-offset-[3px]">1</span>
            </div>
          </div>
        </section>

        <section className="flex h-[914px]">
          <div className="w-[699px] shrink-0">
            <h3 className="pt-[25px] font-[Lato] text-[30.15px] leading-[33px] font-bold">
              Food services and drinking places sales, in
              <br />
              thousands of dollars
            </h3>
            <div className="mt-[15px] flex h-[105px] items-center justify-between border-t-[1.5px] border-b-[1.5px] border-[#9a9fa9] bg-[#ced3de] pr-[5px] pl-[6px] text-[25.2px]">
              <div className="h-full">
                <div className="mt-[23px] ml-[13px] h-[7px] w-[25px] bg-[#e01f26]" />
                <div className="mt-[21px] leading-[48px] tracking-[0.05px]">
                  Total, food services and drinking places ($)<Note>2</Note>
                </div>
              </div>
              <span className="tracking-[-0.5px]">3,924,871</span>
            </div>
            {SERIES_ROWS.map((r, i) => (
              <div
                key={r.name}
                className={`flex h-[54.2px] items-center pr-[4px] text-[25.2px] text-[#4a4a4a] italic ${i < 3 ? "border-b-[1.5px] border-[#9a9fa9]" : ""}`}
              >
                <span className={`mr-[12px] ml-[19px] h-[6px] w-[25px] ${r.color}`} />
                <span className="pb-[1px] leading-[40px]">
                  {r.name}
                  {r.note && <Note>{r.note}</Note>}
                </span>
                <span className="ml-auto pb-[1px]">{r.value}</span>
              </div>
            ))}
            <div className="mt-[24px] h-[463px] rounded-t-[5px] border-[1.5px] border-[#335082] bg-white">
              <SalesChart />
            </div>
          </div>
          <div className="ml-[36.5px] w-[699px] shrink-0 pt-[8.5px]">
            <CanadaMap />
            <div className="mt-[9px] text-center text-[25.3px] leading-[41.6px] font-bold">
              Month-over-month change, June 2020
              <br />
              Total, food services and drinking places (%)
            </div>
            <div className="mt-[32.5px]">
              <MapLegend />
            </div>
          </div>
        </section>

        <button className="mt-[25.500px] flex h-[56px] w-[58px] items-center justify-center rounded-[5px] border border-b-2 border-[#16202c] bg-[#26374a] pt-[1px] pr-[2px] text-white">
          <CopyIcon />
        </button>

        <div className="mt-[14px] rounded-t-[5px] shadow-[0_0_10px_rgba(0,0,0,0.6)]">
          <table className="w-full table-fixed border-collapse overflow-hidden rounded-t-[5px] bg-[#f5f5f5] text-[25.2px] leading-[41.6px]">
            <colgroup>
              <col className="w-[359.5px]" />
              <col className="w-[574px]" />
              <col />
            </colgroup>
            <thead>
              <tr className="h-[103.5px] bg-[#335075] text-white">
                <th className="border-r-[1.5px] border-[#bbb] pl-[10px] text-left">Geography</th>
                <th className="border-r-[1.5px] border-[#bbb] pr-[11px] text-right">
                  Total, food services and drinking places <Note className="leading-none">2</Note>
                  <br />
                  June 2020 ($ thousands)
                </th>
                <th className="pr-[11px] text-right">
                  <span className="tracking-[-0.25px]">May 2020 to June 2020</span>
                  <br />
                  (percentage change)
                </th>
              </tr>
            </thead>
            <tbody>
              {GEO_ROWS.map((g) => (
                <tr key={g.name} className={g.name.length > 22 ? "h-[104.6px]" : "h-[63px]"}>
                  <td className="border-t-[1.5px] border-r-[1.5px] border-[#bbb] pt-[1px] pr-[80px] pl-[10px]">
                    <span className={g.name.length > 22 ? "" : "whitespace-nowrap"}>{g.name}</span>
                    {g.note && (
                      <>
                        {" "}
                        <Note className="leading-none">{g.note}</Note>
                      </>
                    )}
                  </td>
                  <td className="border-t-[1.5px] border-r-[1.5px] border-[#bbb] pt-[1px] pr-[11px] text-right tracking-[-0.5px]">{g.total}</td>
                  <td className="border-t-[1.5px] border-[#bbb] pt-[1px] pr-[10.5px] text-right tracking-[-0.42px]">{g.change}</td>
                </tr>
              ))}
            </tbody>
          </table>
        </div>
      </main>

      <svg className="absolute bottom-0 left-0" width="1600" height="113" viewBox="0 2035 1600 113">
        <path
          fill="#fff"
          d="M0,2056C60,2068 110,2088 179,2111C260,2136 350,2148 440,2148C550,2148 640,2132 724,2110C800,2090 860,2066 944,2048C1000,2038 1060,2035.5 1122,2035.5C1180,2035.5 1230,2040 1276,2048C1370,2066 1430,2093 1495,2110C1530,2120 1565,2128 1600,2135V2149H0Z"
        />
      </svg>
    </div>
  );
}
